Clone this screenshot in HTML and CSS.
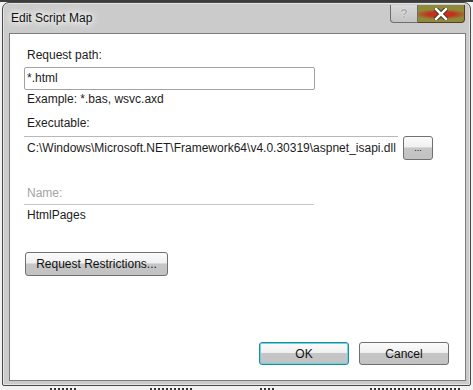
FILE: index.html
```html
<!DOCTYPE html>
<html lang="en">
<head>
    <meta charset="UTF-8">
    <title>Edit Script Map</title>
    <link rel="stylesheet" href="styles.css">
</head>
<body>

    <div class="window">
        <div class="titlebar">
            <span class="title">Edit Script Map</span>
            <div class="caption-btns">
                <span class="cap-help">?</span>
                <span class="cap-close">
                    <svg width="14" height="12" viewBox="0 0 14 12">
                        <path d="M2 1 L12 11 M12 1 L2 11" stroke="#3a3a2a" stroke-width="4.5" stroke-linecap="square"/>
                        <path d="M2 1 L12 11 M12 1 L2 11" stroke="#fff" stroke-width="2.5" stroke-linecap="square"/>
                    </svg>
                </span>
            </div>
        </div>

        <div class="client">
            <div class="form">
                <div class="label first">Request path:</div>
                <div class="textbox">*.html</div>
                <div class="label hint">Example: *.bas, wsvc.axd</div>
                <div class="label exec-label">Executable:</div>
                <div class="exec-row">
                    <div class="readonly-box">C:\Windows\Microsoft.NET\Framework64\v4.0.30319\aspnet_isapi.dll</div>
                    <button class="btn btn-browse">...</button>
                </div>
                <div class="name-field"><span class="label dim">Name:</span></div>
                <div class="label value">HtmlPages</div>
                <button class="btn btn-restrict">Request Restrictions...</button>
            </div>

            <div class="actions">
                <button class="btn btn-ok">OK</button>
                <button class="btn">Cancel</button>
            </div>
        </div>
    </div>

    <!-- tops of the list rows behind the dialog -->
    <div class="behind">
        <span class="frag w1"></span>
        <span class="frag w2"></span>
        <span class="frag w3"></span>
        <span class="frag w4"></span>
    </div>

</body>
</html>
```

FILE: styles.css
```css
body {
    margin: 0;
    width: 473px;
    height: 390px;
    overflow: hidden;
    font-family: "Liberation Sans", Arial, sans-serif;
    font-size: 12px;
    color: #1c1c1c;
    background: linear-gradient(#3c3c3c 0, #3c3c3c 2px, #f2f2f2 2px);
}
.window {
    box-sizing: border-box;
    width: 469px;
    height: 384px;
    margin: 2px 0 0 2px;
    border: 1px solid #4a4a4a;
    border-radius: 7px 7px 2px 2px;
    background: #cbcbcb;
    box-shadow: inset 0 0 0 1px #e4e4e4;
    padding: 0 4px 4px 6px;
    display: flex;
    flex-direction: column;
}
.titlebar {
    height: 30px;
    display: flex;
}
.title {
    padding-left: 2px;
    line-height: 30px;
    font-size: 12px;
    color: #111;
    text-shadow: 0 0 6px #fff, 0 0 10px #fff, 0 0 12px #fff;
}
.caption-btns {
    margin-left: auto;
    margin-top: 2px;
    margin-right: 1px;
    display: flex;
    height: 18px;
}
.cap-help {
    box-sizing: border-box;
    width: 28px;
    height: 18px;
    border: 1px solid #6e6e6e;
    border-top: none;
    border-radius: 0 0 0 4px;
    background: linear-gradient(#d8d8d8, #c4c4c4);
    color: #a8a8a8;
    font-weight: bold;
    font-size: 13px;
    line-height: 17px;
    text-align: center;
    text-shadow: 0 0 1px #fff, 0 0 1px #fff;
}
.cap-close {
    box-sizing: border-box;
    width: 47px;
    height: 18px;
    border: 1px solid #5a3a2a;
    border-top: none;
    border-left: none;
    border-radius: 0 0 4px 0;
    background: radial-gradient(ellipse 60% 30% at 50% 55%, #e02a1c 0%, #c0301c 45%, #8f8a3a 100%);
    display: flex;
    align-items: center;
    justify-content: center;
}
.client {
    flex: 1;
    background: #fff;
    border: 1px solid #7c7c7c;
    display: flex;
    flex-direction: column;
}
.form {
    padding-left: 14px;
}
.label {
    line-height: 15px;
    padding-left: 3px;
}
.first {
    margin-top: 14px;
}
.textbox {
    box-sizing: border-box;
    width: 291px;
    height: 23px;
    margin-top: 4px;
    border: 1px solid #a2a2a2;
    border-radius: 2px;
    padding-left: 2px;
    line-height: 21px;
}
.hint {
    margin-top: 2px;
}
.exec-label {
    margin-top: 9px;
}
.exec-row {
    display: flex;
    margin-top: 5px;
}
.readonly-box {
    box-sizing: border-box;
    width: 374px;
    height: 24px;
    border-top: 1px solid #b8b8b8;
    padding: 4px 0 0 3px;
    line-height: 15px;
    white-space: nowrap;
}
.btn {
    box-sizing: border-box;
    height: 24px;
    border: 1px solid #707070;
    border-radius: 3px;
    background: linear-gradient(#fbfbfb 0%, #f0f0f0 45%, #c6c6c6 50%, #c2c2c2 100%);
    font-family: inherit;
    font-size: 12px;
    color: #111;
    padding: 0;
}
.btn-browse {
    width: 30px;
    margin-left: 5px;
    font-size: 9px;
    line-height: 20px;
}
.name-field {
    width: 290px;
    margin-top: 26px;
    padding-bottom: 3px;
    border-bottom: 1px solid #c6c6c6;
}
.dim {
    color: #a4a4a4;
    display: block;
}
.value {
    margin-top: 3px;
}
.btn-restrict {
    display: block;
    width: 143px;
    margin: 29px 0 0 1px;
}
.actions {
    margin-top: auto;
    display: flex;
    justify-content: flex-end;
    gap: 10px;
    padding: 0 16px 15px 0;
}
.actions .btn {
    width: 90px;
    height: 23px;
}
.btn-ok {
    border-color: #1f8d9c;
    box-shadow: inset 0 0 0 1px #6fd0de;
}
.behind {
    display: flex;
    margin-top: 2px;
    height: 4px;
}
.frag {
    height: 3px;
    background: repeating-linear-gradient(90deg, #333 0 2px, transparent 2px 4px);
}
.w1 { width: 26px; margin-left: 50px; }
.w2 { width: 44px; margin-left: 74px; }
.w3 { width: 14px; margin-left: 66px; }
.w4 { width: 90px; margin-left: 96px; }
```
